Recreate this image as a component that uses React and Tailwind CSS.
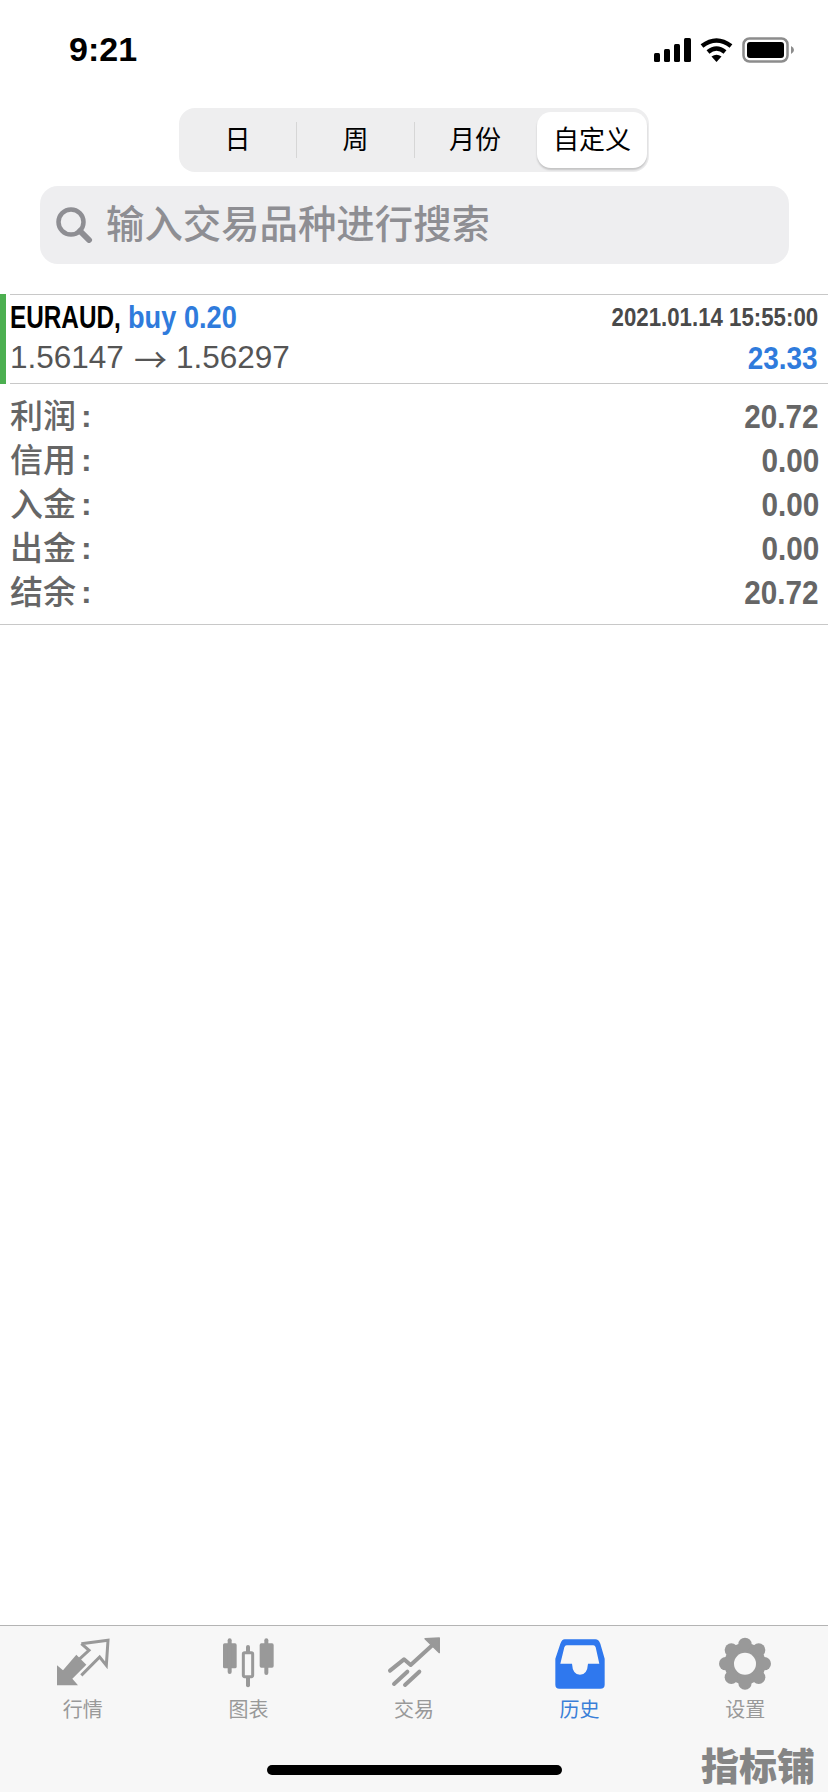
import React from 'react';

const segments = [
  { label: '日', width: 'w-[118px]', divider: true },
  { label: '周', width: 'w-[118px]', divider: true },
  { label: '月份', width: 'w-[122px] pr-[2px]', divider: false },
];

const summary = [
  { label: '利润', value: '20.72' },
  { label: '信用', value: '0.00' },
  { label: '入金', value: '0.00' },
  { label: '出金', value: '0.00' },
  { label: '结余', value: '20.72' },
];

const QuotesIcon = () => (
  <svg className="h-[65px] w-[70px]" viewBox="-5 0 210 195">
    <path d="M22 100 L22 160 L85 160 L68 140 L110 98 L80 68 L40 115 Z" fill="#999999" />
    <path d="M95 35 L175 25 L170 100 L150 75 L95 130 M95 35 L118 55 L85 85" fill="none" stroke="#999999" strokeWidth="9" />
  </svg>
);

const ChartIcon = () => (
  <svg className="h-[65px] w-[70px]" viewBox="640 66 210 195">
    <g fill="#999999">
      <rect x="670" y="100" width="41" height="75" rx="5" />
      <rect x="684" y="85" width="12" height="107" rx="6" />
      <rect x="780" y="100" width="42" height="73" rx="5" />
      <rect x="794" y="85" width="12" height="110" rx="6" />
      <rect x="739" y="105" width="12" height="127" rx="6" />
    </g>
    <rect x="731" y="128" width="28" height="72" rx="4" fill="#f7f7f7" stroke="#999999" strokeWidth="9" />
  </svg>
);

const TradeIcon = () => (
  <svg className="h-[65px] w-[70px]" viewBox="-3 6 210 195">
    <g fill="none" stroke="#999999" strokeWidth="12" strokeLinecap="round" strokeLinejoin="round">
      <path d="M30 122 L72 88 L92 105 L165 38" />
      <path d="M42 162 L82 125 M75 165 L118 125" />
    </g>
    <path d="M135 26 L178 24 L178 68 Z" fill="#999999" stroke="#999999" strokeWidth="4" strokeLinejoin="round" />
  </svg>
);

const HistoryIcon = () => (
  <svg className="h-[65px] w-[70px]" viewBox="-1 0 210 195">
    <path
      fillRule="evenodd"
      fill="#2f78ee"
      d="M58 22 H150 Q160 22 165 35 L178 80 V158 Q178 170 165 170 H42 Q30 170 30 158 V80 L45 35 Q50 22 58 22 Z M64 40 Q59 40 57 46 L45 95 H80 Q82 128 104 128 Q126 128 128 95 H162 L151 46 Q149 40 144 40 Z"
    />
  </svg>
);

const SettingsIcon = () => (
  <svg className="h-[65px] w-[70px]" viewBox="0 0 210 195">
    <circle cx="105" cy="95" r="62" fill="#999999" />
    {[0, 45, 90, 135, 180, 225, 270, 315].map((deg) => (
      <circle
        key={deg}
        cx={105 + 58 * Math.cos((deg * Math.PI) / 180)}
        cy={95 + 58 * Math.sin((deg * Math.PI) / 180)}
        r="20"
        fill="#999999"
      />
    ))}
    <circle cx="105" cy="95" r="33" fill="#f7f7f7" />
  </svg>
);

const tabs = [
  { label: '行情', icon: <QuotesIcon /> },
  { label: '图表', icon: <ChartIcon /> },
  { label: '交易', icon: <TradeIcon /> },
  { label: '历史', icon: <HistoryIcon />, active: true },
  { label: '设置', icon: <SettingsIcon /> },
];

const App = () => {
  return (
    <div className="relative flex h-[1792px] w-[828px] flex-col overflow-hidden bg-white font-['Liberation_Sans','Noto_Sans_CJK_SC',sans-serif]">
      {/* Status bar */}
      <div className="flex h-[108px] items-start justify-between pl-[69px] pr-[34px] pt-[29px]">
        <span className="text-[34px] font-bold leading-[40px] text-black">9:21</span>
        <div className="mt-[8px] flex items-center">
          <svg className="h-[24px] w-[38px]" viewBox="0 0 38 24" fill="#000000">
            <rect x="0" y="15" width="6" height="9" rx="1.5" />
            <rect x="10" y="11" width="6" height="13" rx="1.5" />
            <rect x="20" y="6" width="6" height="18" rx="1.5" />
            <rect x="30" y="0" width="7" height="24" rx="1.5" />
          </svg>
          <svg className="ml-[8px] h-[24px] w-[33px]" viewBox="0 0 33 24">
            <g fill="none" stroke="#000000" strokeWidth="4.5">
              <path d="M2 8 Q16.5 -3 31 8" />
              <path d="M8 14 Q16.5 7 25 14" />
            </g>
            <path d="M11.5 18.5 Q16.5 15 21.5 18.5 L16.5 24 Z" fill="#000000" />
          </svg>
          <svg className="ml-[9px] h-[26px] w-[52px]" viewBox="0 0 52 26">
            <rect x="1.5" y="1.5" width="44" height="23" rx="6" fill="#ffffff" stroke="#8c8c8c" strokeWidth="2.5" />
            <rect x="5" y="5" width="37" height="16" rx="3" fill="#000000" />
            <path d="M49 9 Q52 10.5 52 13 Q52 15.5 49 17 Z" fill="#8c8c8c" />
          </svg>
        </div>
      </div>

      {/* Period tabs */}
      <div className="mx-auto flex h-[64px] w-[470px] items-center rounded-[16px] bg-[#eeeeef] pr-[2px] text-[26px] leading-none text-black">
        {segments.map((seg) => (
          <div key={seg.label} className={`flex h-[36px] items-center justify-center ${seg.width} ${seg.divider ? 'border-r border-[#d6d6d6]' : ''}`}>
            {seg.label}
          </div>
        ))}
        <div className="flex h-[56px] w-[110px] items-center justify-center rounded-[14px] bg-white shadow-[0_2px_2px_rgba(0,0,0,0.18)]">
          自定义
        </div>
      </div>

      {/* Search */}
      <div className="ml-[40px] mr-[39px] mt-[14px] flex h-[78px] items-center rounded-[18px] bg-[#eeeef0] pl-[16px]">
        <svg className="h-[36px] w-[37px]" viewBox="0 0 37 36" fill="none" stroke="#8e8e93">
          <circle cx="15" cy="15" r="12.5" strokeWidth="4.5" />
          <path d="M24 24 L33 33" strokeWidth="6" strokeLinecap="round" />
        </svg>
        <span className="ml-[13px] whitespace-nowrap text-[38.4px] font-medium leading-none text-[#8e8e93]">输入交易品种进行搜索</span>
      </div>

      {/* Position row */}
      <div className="mt-[30px] flex h-[90px]">
        <div className="w-[6px] bg-[#4caf50]" />
        <div className="ml-[4px] flex flex-1 flex-col border-y border-[#c8c8c8] pr-[10px]">
          <div className="flex h-[42px] items-center justify-between pt-[2px]">
            <div className="flex items-baseline whitespace-nowrap text-[32px] font-bold leading-none">
              <span className="w-[118px] origin-left scale-x-[0.76] text-black">EURAUD,</span>
              <span className="origin-left scale-x-[0.85] text-[#2f7bdc]">buy 0.20</span>
            </div>
            <span className="origin-right scale-x-[0.89] whitespace-nowrap text-[25px] font-bold leading-none text-[#4a4a4a]">2021.01.14 15:55:00</span>
          </div>
          <div className="flex flex-1 items-center justify-between pb-[4px]">
            <div className="flex items-center whitespace-nowrap text-[31.5px] leading-none text-[#555555]">
              <span>1.56147</span>
              <span className="ml-[10px] mr-[9px] font-['Noto_Sans_CJK_SC',sans-serif] text-[33px]">→</span>
              <span>1.56297</span>
            </div>
            <span className="origin-right scale-x-[0.9] text-[31px] font-bold leading-none text-[#2f7bdc]">23.33</span>
          </div>
        </div>
      </div>

      {/* Summary */}
      <div className="flex flex-col border-b border-[#c8c8c8] py-[10px] pl-[10px] pr-[9px]">
        {summary.map((row) => (
          <div key={row.label} className="flex h-[44px] items-center justify-between text-[#666666]">
            <div className="flex items-center leading-none">
              <span className="text-[33px] font-medium">{row.label}</span>
              <span className="ml-[5px] text-[32px] font-bold">:</span>
            </div>
            <span className="origin-right scale-x-[0.9] text-[33px] font-bold leading-none">{row.value}</span>
          </div>
        ))}
      </div>

      <div className="flex-1" />

      {/* Bottom tab bar */}
      <div className="h-[167px] border-t border-[#b4b4b4] bg-[#f7f7f7] pt-[6px]">
        <div className="grid grid-cols-5">
          {tabs.map((tab) => (
            <div key={tab.label} className="flex flex-col items-center">
              {tab.icon}
              <span className={`mt-[1px] text-[20px] leading-[24px] ${tab.active ? 'text-[#3a7fd8]' : 'text-[#999999]'}`}>{tab.label}</span>
            </div>
          ))}
        </div>
        <div className="mx-auto mt-[43px] h-[10px] w-[295px] rounded-full bg-black" />
      </div>

      {/* Watermark */}
      <span className="absolute bottom-[6px] right-[13px] text-[38px] font-black leading-[38px] text-[#858585]">指标铺</span>
    </div>
  );
};

export default App;
